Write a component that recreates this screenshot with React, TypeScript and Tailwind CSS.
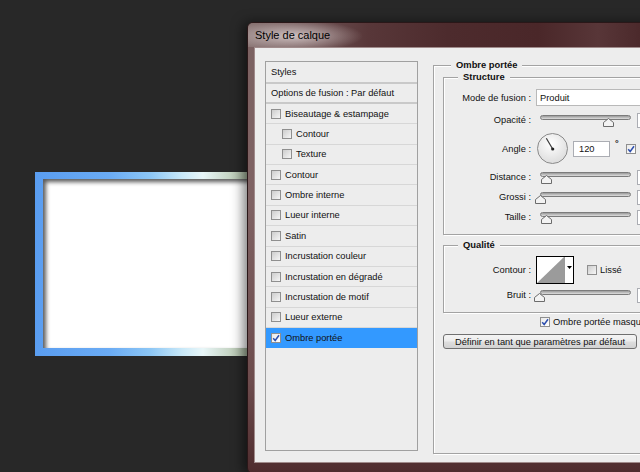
import React from 'react';

const font = "font-['Liberation_Sans',Arial,sans-serif]";

function Check({ checked = false }: { checked?: boolean }) {
  return (
    <span
      className={`relative block w-[10px] h-[10px] shrink-0 border border-[#8f8f8f] ${
        checked ? 'bg-[linear-gradient(135deg,#e9e9e9,#ffffff)]' : 'bg-[linear-gradient(135deg,#cdcdcd,#f6f6f6)]'
      }`}
    >
      {checked && (
        <svg viewBox="0 0 8 8" width="8" height="8" className="absolute left-0 top-0">
          <path d="M1.2 4.2 L3.2 6.5 L7 1.2" fill="none" stroke="#2d4fae" strokeWidth="1.5" />
        </svg>
      )}
    </span>
  );
}

const styleRows: { label: string; indent?: boolean; checked?: boolean; selected?: boolean }[] = [
  { label: 'Biseautage & estampage' },
  { label: 'Contour', indent: true },
  { label: 'Texture', indent: true },
  { label: 'Contour' },
  { label: 'Ombre interne' },
  { label: 'Lueur interne' },
  { label: 'Satin' },
  { label: 'Incrustation couleur' },
  { label: 'Incrustation en dégradé' },
  { label: 'Incrustation de motif' },
  { label: 'Lueur externe' },
  { label: 'Ombre portée', checked: true, selected: true },
];

function Slider({ pos }: { pos: number }) {
  return (
    <div className="relative w-[91px] h-[20px] ml-[4px] shrink-0">
      <div className="absolute left-0 right-0 top-[5px] h-[5px] rounded-full border border-[#7c7c7c] bg-[linear-gradient(#9a9a9a,#dedede)]" />
      <svg className="absolute top-[8px]" style={{ left: pos }} width="11" height="9" viewBox="0 0 11 9">
        <path d="M5.5 0.5 L10.5 4.5 V8.5 H0.5 V4.5 Z" fill="#f3f3f3" stroke="#6c6c6c" />
      </svg>
    </div>
  );
}

function NumBox() {
  return <div className="ml-[6px] w-[30px] h-[15px] shrink-0 bg-white border border-[#abadb3]" />;
}

function Row({
  label,
  cls,
  children,
}: {
  label: string;
  cls: string;
  children: React.ReactNode;
}) {
  return (
    <div className={`flex items-center ${cls}`}>
      <div className="w-[87px] shrink-0 text-right whitespace-nowrap">{label}</div>
      <div className="ml-[5px] flex items-center">{children}</div>
    </div>
  );
}

function Group({
  title,
  titleLeft,
  cls,
  children,
}: {
  title: string;
  titleLeft: string;
  cls: string;
  children?: React.ReactNode;
}) {
  return (
    <div className={`relative border border-[#a3a3a3] shadow-[inset_1px_1px_0_#ffffff,1px_1px_0_#ffffff] ${cls}`}>
      <span
        className={`absolute -top-[7px] ${titleLeft} px-[5px] bg-[#ededed] font-bold text-[9.4px] leading-[12px] whitespace-nowrap`}
      >
        {title}
      </span>
      {children}
    </div>
  );
}

export default function App() {
  return (
    <div className={`relative w-[640px] h-[472px] overflow-hidden bg-[#282828] ${font}`}>
      {/* document image */}
      <div className="absolute left-[35px] top-[172px] w-[230px] h-[184px] px-[8px] pt-[7px] pb-[8px] bg-[linear-gradient(90deg,#5a9df0_0%,#6aabf4_32%,#8cc6f5_50%,#c8e8f8_64%,#e8f6f8_73%,#c4d3c2_85%,#a6b59e_92%,#a6b59e_100%)]">
        <div className="w-full h-full bg-white shadow-[inset_3px_3px_4px_rgba(0,0,0,0.65)]" />
      </div>

      {/* dialog window */}
      <div className="absolute left-[247px] top-[22px] w-[420px] h-[452px] flex flex-col border border-[#2a1718] rounded-tl-[6px] rounded-bl-[6px] bg-[linear-gradient(180deg,#7b6262_0%,#7f6263_40%,#6d4c4d_80%,#4f2c2e_100%)] shadow-[-4px_0_12px_rgba(0,0,0,0.5)]">
        {/* title bar */}
        <div className="h-[24px] shrink-0 flex items-center pl-[7px] rounded-tl-[5px] bg-[radial-gradient(ellipse_70px_16px_at_45px_13px,rgba(215,203,203,0.9),rgba(215,203,203,0)),linear-gradient(90deg,#85706f_0px,#6e5354_60px,#583739_120px,#4d2b2d_200px,#4a2729_290px,#583638_350px,#4b292b_393px)]">
          <span className="text-[11px] text-black leading-none whitespace-nowrap">Style de calque</span>
        </div>

        {/* client area */}
        <div className="ml-[6px] h-[416px] shrink-0 border border-[#a08b8b] bg-[#ededed] flex items-start pl-[10px] pt-[13px] text-[9.3px] text-[#111] leading-[12px]">
          {/* styles list */}
          <div className="w-[153px] h-[390px] shrink-0 border border-[#a0a0a0] bg-[#ededed] flex flex-col">
            <div className="h-[22px] shrink-0 pl-[5px] flex items-center border-b-2 border-[#c9c9c9]">Styles</div>
            <div className="h-[20px] shrink-0 pl-[5px] flex items-center border-b-2 border-[#c9c9c9] whitespace-nowrap">
              Options de fusion : Par défaut
            </div>
            {styleRows.map((r, i) => (
              <div
                key={i}
                className={`h-[20.36px] shrink-0 flex items-center gap-[4px] border-b ${
                  r.selected ? 'bg-[#3399ff] border-[#3399ff]' : 'border-[#d7d7d7]'
                } ${r.indent ? 'pl-[16px]' : 'pl-[5px]'}`}
              >
                <Check checked={r.checked} />
                <span className="whitespace-nowrap">{r.label}</span>
              </div>
            ))}
          </div>

          {/* right settings */}
          <Group title="Ombre portée" titleLeft="left-[17px]" cls="ml-[15px] mt-[4px] w-[230px] h-[389px] shrink-0">
            <div className="flex flex-col">
              <Group title="Structure" titleLeft="left-[14px]" cls="ml-[9px] mt-[11px] w-[220px] h-[158px]">
                <div className="flex flex-col pt-[11px]">
                  <Row label="Mode de fusion :" cls="h-[17px]">
                    <div className="w-[120px] h-[17px] bg-white border border-[#b9b9b9] flex items-center pl-[3px]">Produit</div>
                  </Row>
                  <Row label="Opacité :" cls="h-[20px] mt-[4px]">
                    <Slider pos={63} />
                    <NumBox />
                  </Row>
                  <Row label="Angle :" cls="h-[31px] mt-[3px]">
                    <svg width="31" height="31" viewBox="0 0 31 31" className="ml-[1px] shrink-0">
                      <defs>
                        <radialGradient id="dialg" cx="45%" cy="35%" r="70%">
                          <stop offset="0" stopColor="#ffffff" />
                          <stop offset="1" stopColor="#dadada" />
                        </radialGradient>
                      </defs>
                      <circle cx="15.5" cy="15.5" r="15" fill="url(#dialg)" stroke="#8a8a8a" />
                      <line x1="15.7" y1="16" x2="9.3" y2="5.2" stroke="#3a3a3a" strokeWidth="1.2" />
                      <circle cx="15.7" cy="16" r="1.6" fill="#222" />
                    </svg>
                    <div className="ml-[5px] w-[37px] h-[16px] shrink-0 bg-white border border-[#abadb3] flex items-center pl-[5px]">
                      120
                    </div>
                    <span className="ml-[5px] font-bold self-start mt-[6px] leading-[8px]">°</span>
                    <div className="ml-[7px]">
                      <Check checked />
                    </div>
                  </Row>
                  <Row label="Distance :" cls="h-[20px] mt-[3px]">
                    <Slider pos={1} />
                    <NumBox />
                  </Row>
                  <Row label="Grossi :" cls="h-[20px]">
                    <Slider pos={-5} />
                    <NumBox />
                  </Row>
                  <Row label="Taille :" cls="h-[20px]">
                    <Slider pos={1} />
                    <NumBox />
                  </Row>
                </div>
              </Group>

              <Group title="Qualité" titleLeft="left-[14px]" cls="ml-[9px] mt-[10px] w-[220px] h-[68px]">
                <div className="flex flex-col pt-[10px]">
                  <Row label="Contour :" cls="h-[28px]">
                    <div className="flex h-[28px] shrink-0 border border-black bg-white">
                      <svg width="27" height="26" viewBox="0 0 27 26" className="block">
                        <polygon points="0,26 27,0 27,26" fill="#9b9b9b" />
                      </svg>
                      <div className="w-[9px] border-l border-[#9a9a9a] flex justify-center pt-[9px]">
                        <svg width="5" height="3" viewBox="0 0 5 3" className="block">
                          <polygon points="0,0 5,0 2.5,3" fill="#000" />
                        </svg>
                      </div>
                    </div>
                    <div className="ml-[13px]">
                      <Check />
                    </div>
                    <span className="ml-[3px]">Lissé</span>
                  </Row>
                  <Row label="Bruit :" cls="h-[20px] mt-[1px]">
                    <Slider pos={-6} />
                    <NumBox />
                  </Row>
                </div>
              </Group>

              <div className="mt-[2px] h-[14px] pl-[106px] flex items-center gap-[3px]">
                <Check checked />
                <span className="whitespace-nowrap">Ombre portée masque le calque</span>
              </div>

              <div className="mt-[5px] ml-[9px] w-[194px] h-[15px] rounded-[3px] border border-[#707070] bg-[linear-gradient(180deg,#f4f4f4_0%,#ececec_48%,#dedede_52%,#d2d2d2_100%)] flex items-center justify-center whitespace-nowrap">
                Définir en tant que paramètres par défaut
              </div>
            </div>
          </Group>
        </div>
      </div>
    </div>
  );
}
